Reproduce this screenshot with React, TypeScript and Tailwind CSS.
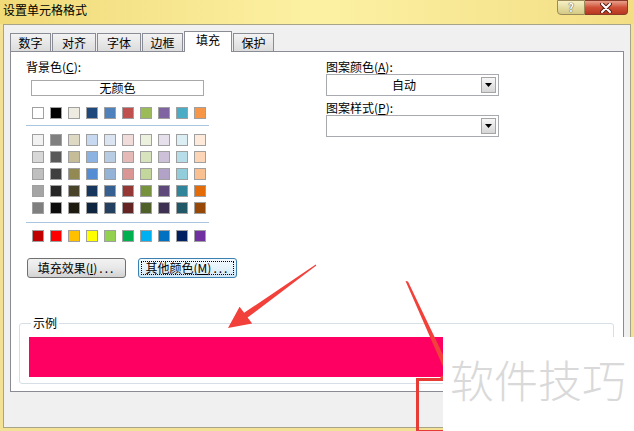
import React from 'react';

const themeRow = [
  'bg-[#ffffff]', 'bg-[#000000]', 'bg-[#eeece1]', 'bg-[#1f497d]', 'bg-[#4f81bd]',
  'bg-[#c0504d]', 'bg-[#9bbb59]', 'bg-[#8064a2]', 'bg-[#4bacc6]', 'bg-[#f79646]',
];

const tintRows = [
  ['bg-[#f2f2f2]', 'bg-[#7f7f7f]', 'bg-[#ddd9c3]', 'bg-[#c6d9f0]', 'bg-[#dbe5f1]', 'bg-[#f2dcdb]', 'bg-[#ebf1dd]', 'bg-[#e5e0ec]', 'bg-[#dbeef3]', 'bg-[#fdeada]'],
  ['bg-[#d8d8d8]', 'bg-[#595959]', 'bg-[#c4bd97]', 'bg-[#8db3e2]', 'bg-[#b8cce4]', 'bg-[#e5b9b7]', 'bg-[#d7e3bc]', 'bg-[#ccc1d9]', 'bg-[#b7dde8]', 'bg-[#fbd5b5]'],
  ['bg-[#bfbfbf]', 'bg-[#3f3f3f]', 'bg-[#938953]', 'bg-[#548dd4]', 'bg-[#95b3d7]', 'bg-[#d99694]', 'bg-[#c3d69b]', 'bg-[#b2a2c7]', 'bg-[#92cddc]', 'bg-[#fac08f]'],
  ['bg-[#a5a5a5]', 'bg-[#262626]', 'bg-[#494429]', 'bg-[#17365d]', 'bg-[#366092]', 'bg-[#953734]', 'bg-[#76923c]', 'bg-[#5f497a]', 'bg-[#31859b]', 'bg-[#e36c09]'],
  ['bg-[#7f7f7f]', 'bg-[#0c0c0c]', 'bg-[#1d1b10]', 'bg-[#0f243e]', 'bg-[#244061]', 'bg-[#632423]', 'bg-[#4f6128]', 'bg-[#3f3151]', 'bg-[#205867]', 'bg-[#974806]'],
];

const standardRow = [
  'bg-[#c00000]', 'bg-[#ff0000]', 'bg-[#ffc000]', 'bg-[#ffff00]', 'bg-[#92d050]',
  'bg-[#00b050]', 'bg-[#00b0f0]', 'bg-[#0070c0]', 'bg-[#002060]', 'bg-[#7030a0]',
];

const tabs = [
  { label: '数字', w: 'w-[41px]' },
  { label: '对齐', w: 'w-[44px]' },
  { label: '字体', w: 'w-[44px]' },
  { label: '边框', w: 'w-[41px]' },
  { label: '填充', w: 'w-[48px]', active: true },
  { label: '保护', w: 'w-[41px]' },
];

const SwatchRow: React.FC<{ colors: string[] }> = ({ colors }) => (
  <div className="flex gap-[6px]">
    {colors.map((c, i) => (
      <div key={i} className={`w-[12px] h-[12px] border border-[#a0a0a0] ${c}`} />
    ))}
  </div>
);

const Combo: React.FC<{ value?: string }> = ({ value }) => (
  <div className="flex items-center w-[173px] h-[22px] border border-[#a7abb0] bg-white">
    <div className="flex-1 text-center">{value}</div>
    <div className="flex items-center justify-center w-[15px] h-[16px] mr-[2px] border border-[#a5a5a5] bg-gradient-to-b from-[#f7f7f7] to-[#d6d6d6]">
      <svg width="7" height="4" viewBox="0 0 7 4">
        <path d="M0 0H7L3.5 4Z" fill="#000" />
      </svg>
    </div>
  </div>
);

const App: React.FC = () => {
  return (
    <div className="relative w-[634px] h-[431px] overflow-hidden bg-[#f3e296] font-['Noto_Sans_CJK_SC',sans-serif] text-[12px] leading-[14px] text-black">
      {/* Title bar */}
      <div className="flex items-start justify-between h-[24px] bg-gradient-to-r from-[#f1da78] via-[#fcf1a3] to-[#f3de84]">
        <div className="pl-[3px] pt-[3px]">设置单元格格式</div>
        <div className="flex mr-[6px]">
          <div className="flex items-center justify-center w-[28px] h-[15px] rounded-bl-[4px] border border-[#9a8a5a] bg-gradient-to-b from-[#f6f0c4] to-[#d5c984]">
            <span className="text-[11px] leading-[11px] font-bold text-white [text-shadow:0_0_1px_#444,0_0_1px_#444]">?</span>
          </div>
          <div className="flex items-center justify-center w-[43px] h-[15px] rounded-br-[4px] border border-l-0 border-[#8a3a28] bg-gradient-to-b from-[#e7a08c] via-[#cf4f37] to-[#b8371f]">
            <svg width="12" height="10" viewBox="0 0 12 10">
              <path d="M2 1L10 9M10 1L2 9" stroke="#5a2216" strokeWidth="4" strokeLinecap="round" />
              <path d="M2 1L10 9M10 1L2 9" stroke="#fff" strokeWidth="2" strokeLinecap="round" />
            </svg>
          </div>
        </div>
      </div>

      {/* Window body */}
      <div className="mx-[3px] h-[404px] border border-[#a8a48a] bg-[#f0f0f0]">
        {/* Tabs */}
        <div className="flex items-end gap-[1px] h-[26px] pl-[6px]">
          {tabs.map((t) =>
            t.active ? (
              <div key={t.label} className={`relative z-10 -mb-[1px] h-[21px] ${t.w} border border-b-0 border-[#898c95] bg-white pt-[1px] text-center`}>
                {t.label}
              </div>
            ) : (
              <div key={t.label} className={`h-[18px] ${t.w} border border-b-0 border-[#898c95] bg-gradient-to-b from-[#f3f3f3] to-[#dcdcdc] pt-[2px] text-center`}>
                {t.label}
              </div>
            )
          )}
        </div>

        {/* Panel */}
        <div className="flex flex-col ml-[6px] w-[614px] h-[341px] border border-[#898c95] bg-white">
          <div className="flex">
            {/* Background colour */}
            <div className="w-[315px] pl-[15px] pt-[8px]">
              <div>背景色(<u>C</u>):</div>
              <div className="mt-[6px] ml-[5px] w-[173px] h-[16px] border border-[#a8a8a8] text-center leading-[14px]">无颜色</div>
              <div className="mt-[11px] ml-[6px]">
                <SwatchRow colors={themeRow} />
              </div>
              <div className="mt-[6px] w-[183px] h-px bg-[#a9c5e0]" />
              <div className="flex flex-col gap-[5px] mt-[8px] ml-[6px]">
                {tintRows.map((r, i) => (
                  <SwatchRow key={i} colors={r} />
                ))}
              </div>
              <div className="mt-[8px] w-[183px] h-px bg-[#a9c5e0]" />
              <div className="mt-[7px] ml-[6px]">
                <SwatchRow colors={standardRow} />
              </div>
              <div className="flex gap-[12px] mt-[16px] ml-[1px]">
                <div className="flex items-center justify-center w-[99px] h-[20px] rounded-[3px] border border-[#707070] bg-gradient-to-b from-[#f2f2f2] via-[#e8e8e8] to-[#d2d2d2]">
                  填充效果(<u>I</u>)<span className="tracking-[2px] ml-[2px]">...</span>
                </div>
                <div className="flex items-center justify-center w-[99px] h-[20px] rounded-[3px] border border-[#3c7fb1] bg-gradient-to-b from-[#f4fafe] via-[#e6f3fb] to-[#cfe6f5] p-[2px]">
                  <div className="flex items-center justify-center w-full h-full border border-dotted border-black">
                    其他颜色(<u>M</u>)<span className="tracking-[2px] ml-[2px]">...</span>
                  </div>
                </div>
              </div>
            </div>

            {/* Pattern */}
            <div className="pt-[8px]">
              <div>图案颜色(<u>A</u>):</div>
              <Combo value="自动" />
              <div className="mt-[5px]">图案样式(<u>P</u>):</div>
              <Combo />
            </div>
          </div>

          {/* Sample */}
          <fieldset className="mt-[38px] ml-[8px] w-[595px] rounded-[3px] border border-[#d5dfe5] px-[9px] pb-[6px]">
            <legend className="ml-[2px] px-[2px]">示例</legend>
            <div className="mt-[7px] h-[40px] bg-[#fe0062]" />
          </fieldset>
        </div>
      </div>

      {/* Red highlight box */}
      <div className="absolute left-[416px] top-[378px] w-[40px] h-[55px] border-[3px] border-[#e63c35]" />

      {/* Annotation arrows */}
      <svg className="absolute inset-0 pointer-events-none" width="634" height="431" viewBox="0 0 634 431">
        <polygon points="316.3,265.4 247.6,317.6 252.2,323.6 228,328 239.6,306.8 244.1,312.8 315.7,264.6" fill="#f2403a" />
        <polygon points="405.5,281 408,281.6 451.3,372 457.6,368 460,398 440,377 446,373.4" fill="#f2403a" />
      </svg>

      {/* Watermark */}
      <div className="absolute left-[443px] top-[337px] w-[191px] h-[94px] bg-white pl-[7px] pt-[20px]">
        <div className="text-[44px] leading-[44px] font-light text-[#d9d9d9] whitespace-nowrap">软件技巧</div>
      </div>
    </div>
  );
};

export default App;
